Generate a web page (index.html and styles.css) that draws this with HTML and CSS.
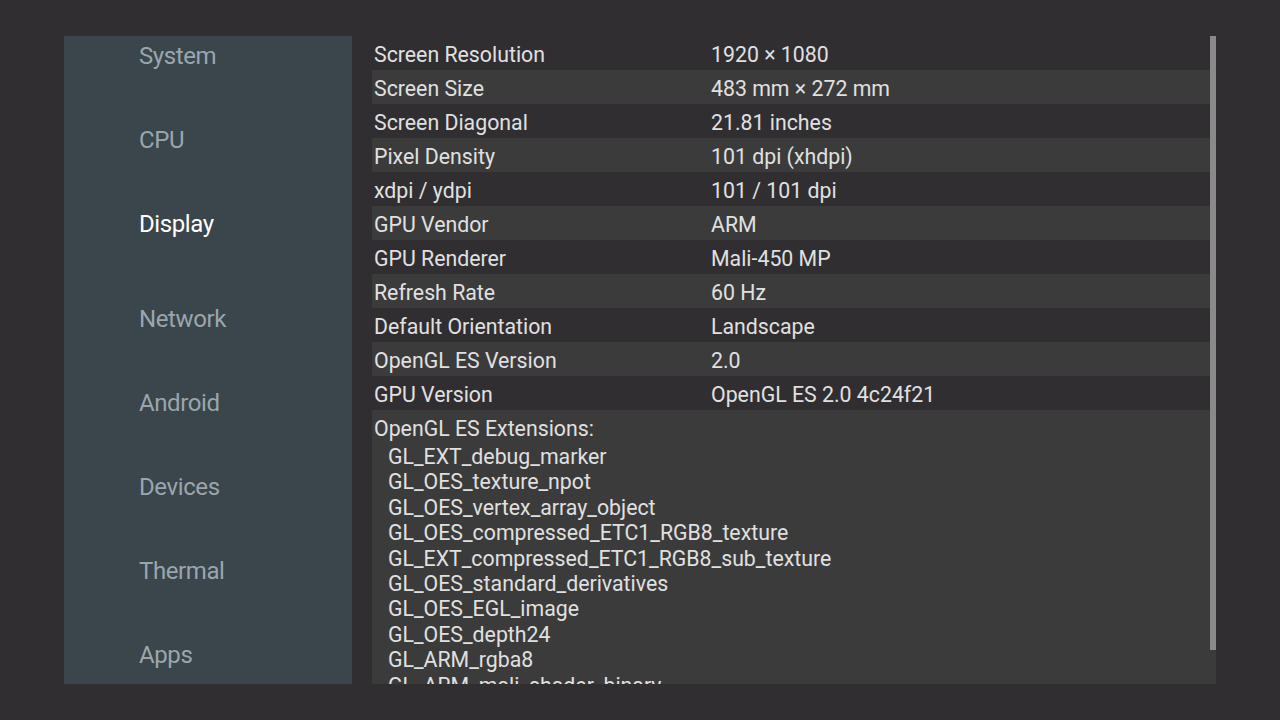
FILE: index.html
```html
<!DOCTYPE html>
<html lang="en">
<head>
    <meta charset="UTF-8">
    <meta name="viewport" content="width=device-width, initial-scale=1.0">
    <title>Display</title>
    <link rel="stylesheet" href="styles.css">
</head>
<body>
    <div class="screen">
        <div class="sidebar">
            <div class="menu-item">System</div>
            <div class="menu-item">CPU</div>
            <div class="menu-item active">Display</div>
            <div class="menu-item">Network</div>
            <div class="menu-item">Android</div>
            <div class="menu-item">Devices</div>
            <div class="menu-item">Thermal</div>
            <div class="menu-item">Apps</div>
        </div>
        <div class="content">
            <div class="rows">
                <div class="row"><span class="label">Screen Resolution</span><span class="value">1920 × 1080</span></div>
                <div class="row alt"><span class="label">Screen Size</span><span class="value">483 mm × 272 mm</span></div>
                <div class="row"><span class="label">Screen Diagonal</span><span class="value">21.81 inches</span></div>
                <div class="row alt"><span class="label">Pixel Density</span><span class="value">101 dpi (xhdpi)</span></div>
                <div class="row"><span class="label">xdpi / ydpi</span><span class="value">101 / 101 dpi</span></div>
                <div class="row alt"><span class="label">GPU Vendor</span><span class="value">ARM</span></div>
                <div class="row"><span class="label">GPU Renderer</span><span class="value">Mali-450 MP</span></div>
                <div class="row alt"><span class="label">Refresh Rate</span><span class="value">60 Hz</span></div>
                <div class="row"><span class="label">Default Orientation</span><span class="value">Landscape</span></div>
                <div class="row alt"><span class="label">OpenGL ES Version</span><span class="value">2.0</span></div>
                <div class="row"><span class="label">GPU Version</span><span class="value">OpenGL ES 2.0 4c24f21</span></div>
                <div class="extensions">
                    <div class="ext-title">OpenGL ES Extensions:</div>
                    <div class="ext">GL_EXT_debug_marker</div>
                    <div class="ext">GL_OES_texture_npot</div>
                    <div class="ext">GL_OES_vertex_array_object</div>
                    <div class="ext">GL_OES_compressed_ETC1_RGB8_texture</div>
                    <div class="ext">GL_EXT_compressed_ETC1_RGB8_sub_texture</div>
                    <div class="ext">GL_OES_standard_derivatives</div>
                    <div class="ext">GL_OES_EGL_image</div>
                    <div class="ext">GL_OES_depth24</div>
                    <div class="ext">GL_ARM_rgba8</div>
                    <div class="ext">GL_ARM_mali_shader_binary</div>
                </div>
            </div>
            <div class="scrollbar"></div>
        </div>
    </div>
</body>
</html>
```
FILE: styles.css
```css
body {
    margin: 0;
    background-color: #302e31;
    font-family: Roboto, "Liberation Sans", sans-serif;
    width: 1280px;
    height: 720px;
    overflow: hidden;
}
.screen {
    display: flex;
    padding: 36px 0 0 64px;
    height: 648px;
}
.sidebar {
    width: 288px;
    height: 648px;
    background-color: #3a454c;
    padding: 4px 0 0 75px;
    box-sizing: border-box;
    display: flex;
    flex-direction: column;
    gap: 52px;
    overflow: hidden;
}
.menu-item {
    font-size: 24px;
    line-height: 32px;
    letter-spacing: -0.4px;
    color: #9ba6ac;
}
.menu-item.active {
    color: #ffffff;
    margin-bottom: 11px;
}
.content {
    position: relative;
    margin-left: 20px;
    width: 844px;
    height: 648px;
    overflow: hidden;
}
.rows {
    width: 838px;
}
.row {
    display: flex;
    height: 34px;
    box-sizing: border-box;
    padding: 2px 0 0 2px;
    align-items: center;
    font-size: 21.3px;
    color: #e0e0e0;
}
.row.alt {
    background-color: #3b3b3b;
}
.label {
    width: 337px;
}
.extensions {
    background-color: #3b3b3b;
    width: 844px;
    height: 274px;
    padding: 5px 0 0 2px;
    box-sizing: border-box;
    font-size: 21.3px;
    color: #e0e0e0;
}
.ext-title {
    line-height: 27px;
    margin-bottom: 2px;
}
.ext {
    line-height: 25.4px;
    padding-left: 14px;
}
.scrollbar {
    position: absolute;
    top: 0;
    right: 0;
    width: 6px;
    height: 614px;
    background-color: #8a8a8a;
}
```
